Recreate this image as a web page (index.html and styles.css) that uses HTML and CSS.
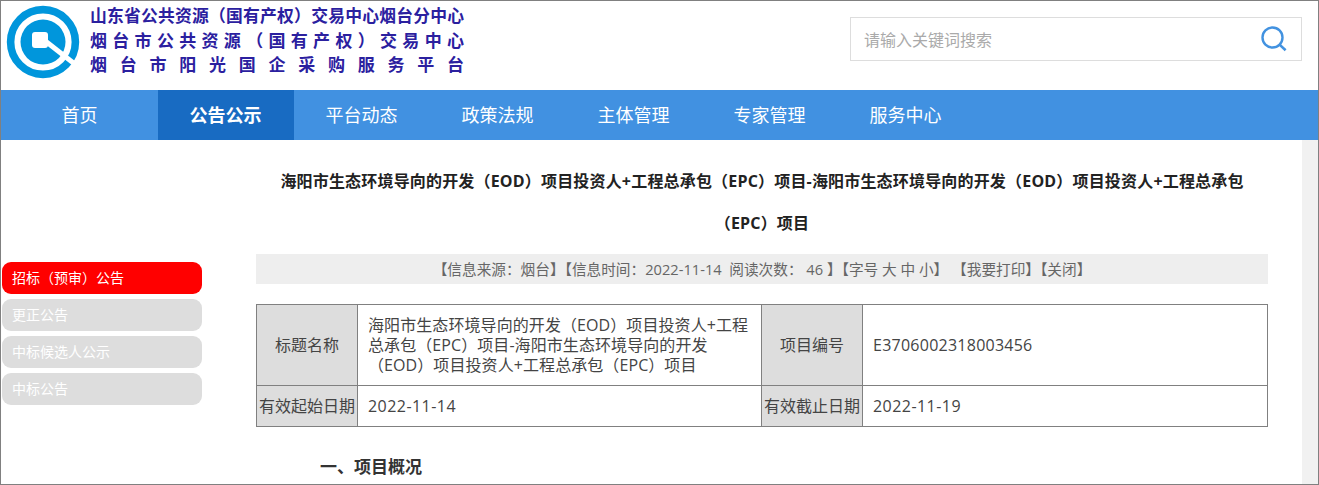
FILE: index.html
```html
<!DOCTYPE html>
<html lang="zh-CN">
<head>
<meta charset="utf-8">
<title>招标（预审）公告</title>
<link rel="stylesheet" href="styles.css">
</head>
<body>
<div class="frame">
  <header class="top">
    <div class="brand">
      <svg class="logo" width="74" height="74" viewBox="0 0 74 74" aria-hidden="true">
        <circle cx="37" cy="37" r="32.4" fill="none" stroke="#0096dc" stroke-width="7.6"/>
        <circle cx="37" cy="37" r="22.5" fill="#0096dc"/>
        <rect x="26" y="27" width="16" height="16" rx="3" fill="#fff"/>
        <path d="M38 35 L70 60" stroke="#fff" stroke-width="5" fill="none"/>
      </svg>
      <div class="brand-text">
        <div class="brand-line">山东省公共资源（国有产权）交易中心烟台分中心</div>
        <div class="brand-line">烟台市公共资源（国有产权）交易中心</div>
        <div class="brand-line">烟台市阳光国企采购服务平台</div>
      </div>
    </div>
    <div class="search">
      <span class="search-hint">请输入关键词搜索</span>
      <svg width="26" height="26" viewBox="0 0 26 26" aria-hidden="true">
        <circle cx="11.5" cy="11.5" r="10" fill="none" stroke="#4292e0" stroke-width="2.4"/>
        <path d="M18.6 18.6 L24.6 24.2" stroke="#4292e0" stroke-width="2.6" fill="none"/>
      </svg>
    </div>
  </header>
  <nav class="nav">
    <a class="nav-item nav-first">首页</a>
    <a class="nav-item nav-active">公告公示</a>
    <a class="nav-item">平台动态</a>
    <a class="nav-item">政策法规</a>
    <a class="nav-item">主体管理</a>
    <a class="nav-item">专家管理</a>
    <a class="nav-item">服务中心</a>
  </nav>
  <div class="body-row">
    <aside class="side">
      <a class="side-item side-on">招标（预审）公告</a>
      <a class="side-item">更正公告</a>
      <a class="side-item">中标候选人公示</a>
      <a class="side-item">中标公告</a>
    </aside>
    <main class="content">
      <h1 class="title">海阳市生态环境导向的开发（EOD）项目投资人+工程总承包（EPC）项目-海阳市生态环境导向的开发（EOD）项目投资人+工程总承包（EPC）项目</h1>
      <div class="meta">【信息来源：烟台】【信息时间：2022-11-14 &nbsp;阅读次数： 46 】【字号 大 中 小】 【我要打印】【关闭】</div>
      <table class="info">
        <colgroup><col class="c1"><col class="c2"><col class="c3"><col class="c4"></colgroup>
        <tr class="r1">
          <th>标题名称</th>
          <td class="name-cell">海阳市生态环境导向的开发（EOD）项目投资人+工程总承包（EPC）项目-海阳市生态环境导向的开发（EOD）项目投资人+工程总承包（EPC）项目</td>
          <th>项目编号</th>
          <td class="num-code">E3706002318003456</td>
        </tr>
        <tr class="r2">
          <th>有效起始日期</th>
          <td class="num-date">2022-11-14</td>
          <th>有效截止日期</th>
          <td class="num-date">2022-11-19</td>
        </tr>
      </table>
      <h2 class="section">一、项目概况</h2>
    </main>
    <div class="scrollbar"></div>
  </div>
</div>
</body>
</html>
```
FILE: styles.css
```css
* { box-sizing: border-box; }
html, body { margin: 0; padding: 0; background: #fff; }
body { font-family: "Open Sans", "Noto Sans CJK SC", sans-serif; color: #333; }
.frame { width: 1319px; height: 485px; border: 1px solid #808080; overflow: hidden; display: flex; flex-direction: column; }
.top { height: 89px; flex: none; display: flex; justify-content: space-between; padding-right: 16px; }
.brand { display: flex; padding: 3px 0 0 5px; }
.logo { margin-top: 1px; }
.brand-text { margin-left: 10px; width: 374px; margin-top: -1px; }
.brand-line { font-family: "Noto Sans CJK SC", sans-serif; font-weight: 700; font-size: 17px; line-height: 24.5px; color: #2b209f; text-align: justify; text-align-last: justify; }
.brand-line:first-child { font-size: 16.8px; }
.search { width: 452px; height: 44px; margin-top: 16px; border: 1px solid #ddd; display: flex; align-items: center; justify-content: space-between; padding: 0 14px 0 13px; }
.search-hint { font-size: 16px; color: #aaa; }
.nav { height: 50px; flex: none; background: #4191e1; display: flex; }
.nav-item { width: 136px; padding-right: 1px; line-height: 50px; text-align: center; color: #fff; font-size: 18px; }
.nav-first { width: 157px; padding-right: 0; }
.nav-active { background: #186bc2; font-weight: 700; }
.body-row { flex: 1; display: flex; min-height: 0; }
.side { width: 200px; flex: none; margin-left: 1px; padding-top: 122px; display: flex; flex-direction: column; gap: 5px; }
.side-item { height: 32px; line-height: 32px; border-radius: 9px; background: #ddd; color: #fff; font-size: 14px; padding-left: 10px; }
.side-on { background: #f00; }
.content { flex: 1; min-width: 0; margin: 0 34px 0 54px; }
.title { margin: 20px 0 0; padding: 0 20px; font-size: 16px; line-height: 42px; font-weight: 700; letter-spacing: .18px; color: #222; text-align: center; }
.meta { margin-top: 10px; height: 30px; line-height: 30px; background: #eee; font-size: 14.67px; color: #666; text-align: center; }
.info { margin-top: 20px; width: 100%; border-collapse: collapse; table-layout: fixed; font-size: 16px; color: #444; }
.c1 { width: 101px; }
.c2 { width: 404px; }
.c3 { width: 101px; }
.info th, .info td { border: 1px solid #808080; padding: 0; line-height: 20px; }
.info th { background: #ddd; font-weight: 400; text-align: center; }
.info td { padding: 0 10px; text-align: left; }
.name-cell { letter-spacing: .08px; }
.num-date { letter-spacing: .45px; }
.num-code { letter-spacing: .25px; }
.r1 { height: 81px; }
.r2 { height: 41px; }
.section { margin: 28px 0 0 64px; font-size: 17px; line-height: 24px; font-weight: 700; color: #333; }
.scrollbar { width: 16px; flex: none; background: #f1f1f1; }
```
